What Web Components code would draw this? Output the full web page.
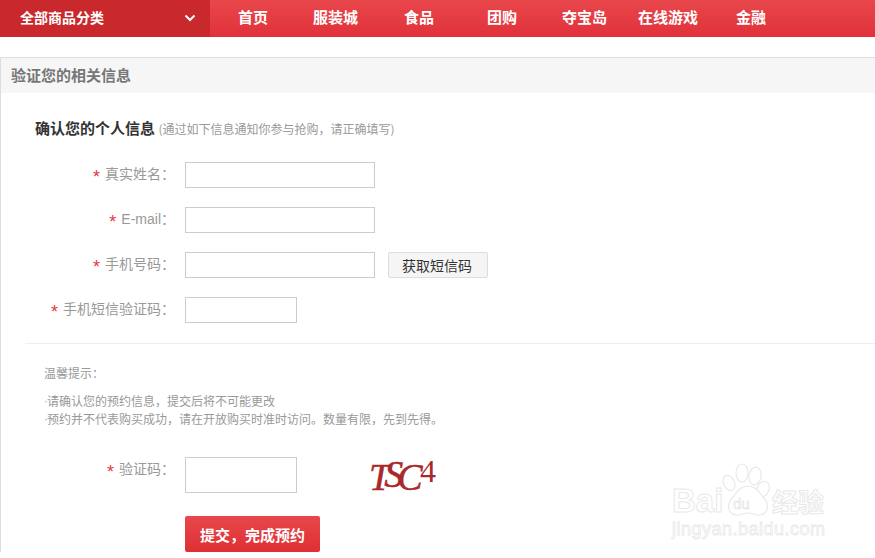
<!DOCTYPE html>
<html lang="zh"><head><meta charset="utf-8"><title>验证信息</title>
<style>
html,body{margin:0;padding:0;background:#fff;overflow:hidden;height:558px}
body{font-family:"Liberation Sans","Noto Sans CJK SC",sans-serif;position:relative}
</style></head><body>
<top-nav>
  <nav-item style="--w:45px">首页</nav-item>
  <nav-item style="--w:46px">服装城</nav-item>
  <nav-item style="--w:53px">食品</nav-item>
  <nav-item style="--w:45px">团购</nav-item>
  <nav-item style="--w:31px">夺宝岛</nav-item>
  <nav-item style="--w:38px">在线游戏</nav-item>
  <nav-item style="--w:0px">金融</nav-item>
</top-nav>
<info-panel heading="验证您的相关信息">
  <section-title note="(通过如下信息通知你参与抢购，请正确填写)">确认您的个人信息</section-title>
  <form-row label="真实姓名："><text-box></text-box></form-row>
  <form-row label="E-mail："><text-box></text-box></form-row>
  <form-row label="手机号码："><text-box></text-box><sms-button>获取短信码</sms-button></form-row>
  <form-row label="手机短信验证码："><text-box style="--w:112px"></text-box></form-row>
  <hint-box heading="温馨提示：">
    <hint-line>请确认您的预约信息，提交后将不可能更改</hint-line>
    <hint-line>预约并不代表购买成功，请在开放购买时准时访问。数量有限，先到先得。</hint-line>
  </hint-box>
  <form-row label="验证码："><text-box style="--w:112px;--h:36px"></text-box><captcha-image></captcha-image></form-row>
  <submit-button>提交，完成预约</submit-button>
</info-panel>
<baidu-mark></baidu-mark>
<script>
function def(name, html, init){
  customElements.define(name, class extends HTMLElement{
    constructor(){super();const r=this.attachShadow({mode:"open"});r.innerHTML=html;}
    connectedCallback(){ if(init) init(this, this.shadowRoot); }
  });
}
const CJK='"Noto Sans CJK SC","Liberation Sans",sans-serif';
def("top-nav",`<style>
:host{display:flex;height:37px;background:linear-gradient(#e8474c,#e1313a 100%);font-family:${CJK}}
.all{width:210px;height:37px;background:#c9292c;color:#fff;font-size:14px;font-weight:700;line-height:20px;display:flex;box-sizing:border-box;padding:0 14px 3px 20px;justify-content:space-between;align-items:center;flex:none;margin-right:28px}
svg{display:block;position:relative;top:1px}
.items{display:flex}
</style><div class="all"><span>全部商品分类</span><svg width="12" height="8" viewBox="0 0 12 8"><path d="M1.5 1.5 6 6l4.5-4.5" fill="none" stroke="#fff" stroke-width="2"/></svg></div><div class="items"><slot></slot></div>`);
def("nav-item",`<style>
:host{display:block;color:#fff;font-size:15px;font-weight:700;line-height:34px;margin-right:var(--w);white-space:nowrap}
</style><slot></slot>`);
def("info-panel",`<style>
:host{display:block;margin-top:20px;border-top:1px solid #ddd;border-left:1px solid #ddd;font-family:${CJK}}
h2{margin:0;height:35px;background:#f6f6f6;color:#777;font-size:15px;font-weight:700;line-height:33px;padding-left:10px}
.body{display:block}
</style><h2></h2><div class="body"><slot></slot></div>`,(el,r)=>{r.querySelector("h2").textContent=el.getAttribute("heading")});
def("section-title",`<style>
:host{display:block;padding:23px 0 21px 34px;line-height:24px;color:#333;font-size:15px;font-weight:700;white-space:nowrap}
span{font-size:12px;font-weight:400;color:#999}
</style><slot></slot> <span></span>`,(el,r)=>{r.querySelector("span").textContent=el.getAttribute("note")});
def("form-row",`<style>
:host{display:flex;align-items:flex-start;margin-bottom:19px}
.l{width:174px;flex:none;text-align:right;font:14px/25px "Liberation Sans","Noto Sans CJK SC",sans-serif;color:#999;white-space:nowrap;box-sizing:border-box;margin-right:10px}
b{color:#e4393c;font-weight:400;font-family:"Liberation Sans",sans-serif;margin-right:5px;font-size:18px;line-height:0;position:relative;top:4px}
.c{display:flex;gap:13px;align-items:flex-start}
</style><div class="l"><b>*</b><span></span></div><div class="c"><slot></slot></div>`,(el,r)=>{r.querySelector("span").textContent=el.getAttribute("label")});
def("text-box",`<style>
:host{display:block;width:var(--w,190px);height:var(--h,26px);box-sizing:border-box;border:1px solid #ccc;background:#fff}
</style>`);
def("sms-button",`<style>
:host{display:block;width:100px;height:26px;box-sizing:border-box;border:1px solid #ddd;border-radius:2px;background:#f5f5f5;color:#333;font-size:14px;line-height:25px;text-align:center;white-space:nowrap;padding-right:2px}
</style><slot></slot>`);
def("hint-box",`<style>
:host{display:block;margin:20px 0 0 24px;border-top:1px solid #eee;padding:20px 0 29px 19px;color:#999;font-size:12px;line-height:18px}
p{margin:0 0 10px}
</style><p></p><slot></slot>`,(el,r)=>{r.querySelector("p").textContent=el.getAttribute("heading")});
def("hint-line",`<style>
:host{display:flex;white-space:nowrap}
i{flex:none;width:3px;font:400 12px/18px "Liberation Sans",sans-serif;color:#c8a890}
</style><i>·</i><slot></slot>`);
def("captcha-image",`<style>
:host{display:block;width:76px;height:36px;margin-left:54px}
svg{display:block;overflow:visible}
text{font-family:"Liberation Serif",serif;font-style:italic;fill:#a8282b}
</style><svg width="76" height="36" viewBox="0 0 76 36">
<text x="5" y="33" dy="0 -3 3" font-size="38" stroke="#a8282b" stroke-width=".5" style="letter-spacing:-6px">TSC</text>
<text x="56" y="25" font-size="32" style="font-style:normal">4</text>
</svg>`);
def("submit-button",`<style>
:host{display:block;width:135px;height:36px;margin:23px 0 0 184px;border-radius:2px;background:linear-gradient(#e8474c,#df2f34);color:#fff;font-size:15px;font-weight:700;line-height:38px;text-align:center;white-space:nowrap}
</style><slot></slot>`);
def("baidu-mark",`<style>
:host{position:absolute;left:670px;top:462px;width:200px;height:90px;display:block}
.t{position:absolute;white-space:nowrap;color:#fff;-webkit-text-stroke:1px #e9e9e9}
.bai{left:2px;top:19px;font:700 33px/40px "Liberation Sans",sans-serif}
.cn{left:102px;top:23px;font:700 26px/32px "Noto Sans CJK SC",sans-serif}
.url{left:2px;top:57px;font:400 18px/20px "Liberation Sans",sans-serif;-webkit-text-stroke:.8px #e9e9e9;letter-spacing:.5px}
.d{left:63px;top:33px;font:400 15px/18px "Liberation Sans",sans-serif;-webkit-text-stroke:.7px #e4e4e4}
svg{position:absolute;left:0;top:0}
</style>
<span class="t bai">Bai</span>
<svg width="110" height="60" viewBox="0 0 110 60" fill="#fff" stroke="#e9e9e9" stroke-width="1.2">
<ellipse cx="59" cy="21" rx="5.5" ry="8" transform="rotate(-25 59 21)"/>
<ellipse cx="72" cy="11" rx="6" ry="9"/>
<ellipse cx="85" cy="14" rx="6" ry="9" transform="rotate(10 85 14)"/>
<ellipse cx="93" cy="27" rx="6" ry="8" transform="rotate(25 93 27)"/>
<path d="M78 24c8 0 11 6 15 11 7 7 6 18-5 18-4 0-6-2-10-2s-6 2-10 2c-11 0-12-11-5-18 4-5 7-11 15-11z"/>
</svg>
<span class="t d">du</span>
<span class="t cn">经验</span>
<span class="t url">jingyan.baidu.com</span>`);
</script>
</body></html>
